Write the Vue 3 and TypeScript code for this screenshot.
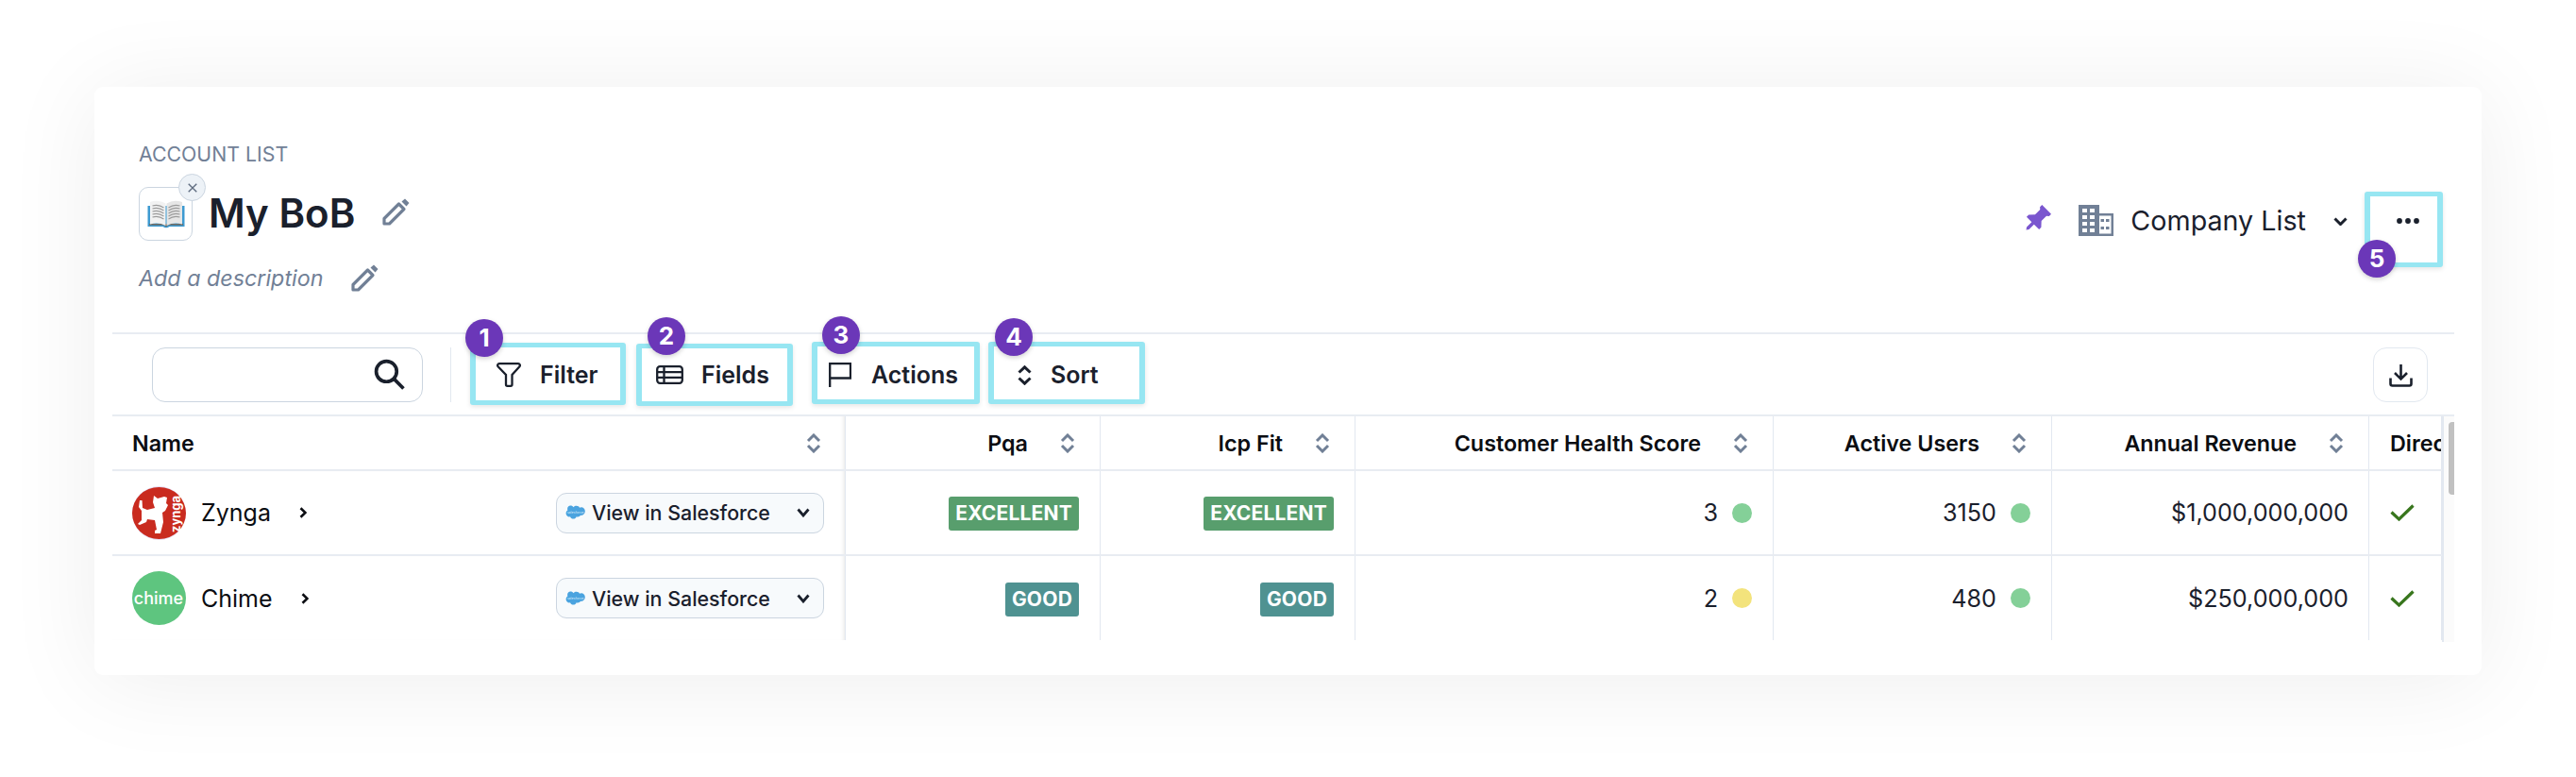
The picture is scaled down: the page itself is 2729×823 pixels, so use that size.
<script setup lang="ts">
interface Col { label: string; cls: string }
interface Row {
  name: string
  logo: 'zynga' | 'chime'
  pqa: string
  fit: string
  health: number
  healthColor: string
  users: number
  usersColor: string
  revenue: string
}
const cols: Col[] = [
  { label: 'Pqa', cls: 'c-pqa' },
  { label: 'Icp Fit', cls: 'c-fit' },
  { label: 'Customer Health Score', cls: 'c-health' },
  { label: 'Active Users', cls: 'c-users' },
  { label: 'Annual Revenue', cls: 'c-rev' },
]
const rows: Row[] = [
  { name: 'Zynga', logo: 'zynga', pqa: 'EXCELLENT', fit: 'EXCELLENT', health: 3, healthColor: '#84d098', users: 3150, usersColor: '#84d098', revenue: '$1,000,000,000' },
  { name: 'Chime', logo: 'chime', pqa: 'GOOD', fit: 'GOOD', health: 2, healthColor: '#f3e37c', users: 480, usersColor: '#84d098', revenue: '$250,000,000' },
]
const bookLines = [9, 12, 15, 18, 21]
</script>

<template>
  <div class="page">
    <section class="card">
      <header class="head">
        <div class="head-left">
          <div class="eyebrow">ACCOUNT LIST</div>
          <div class="title-row">
            <div class="emoji-box">
              <svg class="book" viewBox="0 0 40 32" aria-hidden="true">
                <path d="M0.5 7H39.5V29H23.5Q20 31.5 16.5 29H0.5Z" fill="#3d9ad1" />
                <path d="M2 27.5H18L20 29.5L22 27.5H38V26H2Z" fill="#6f6a62" />
                <path d="M3 3Q12 0 19.5 4.5V28Q12 24 3 26.5Z" fill="#f2f2f2" />
                <path d="M37 3Q28 0 20.5 4.5V28Q28 24 37 26.5Z" fill="#e6e6e6" />
                <g stroke="#9a9a9a" stroke-width="1.1" fill="none">
                  <path v-for="y in bookLines" :key="'l' + y" :d="`M5.5 ${y - 2}Q12 ${y - 4} 17.5 ${y}`" />
                  <path v-for="y in bookLines" :key="'r' + y" :d="`M34.5 ${y - 2}Q28 ${y - 4} 22.5 ${y}`" />
                </g>
              </svg>
              <span class="close">
                <svg viewBox="0 0 14 14" aria-hidden="true"><path d="M2 2L12 12M12 2L2 12" /></svg>
              </span>
            </div>
            <h1 class="title">My BoB</h1>
            <svg class="pencil pencil-title" viewBox="0 0 29 29" aria-hidden="true">
              <path class="pencil-body" d="M2 21.5L17.5 6L23 11.5L7.5 27H2Z" />
              <path class="pencil-tip" d="M20.5 3.5L24 0.5L28.5 5L25.5 8.5Z" />
            </svg>
          </div>
          <div class="desc-row">
            <span class="desc">Add a description</span>
            <svg class="pencil pencil-desc" viewBox="0 0 29 29" aria-hidden="true">
              <path class="pencil-body" d="M2 21.5L17.5 6L23 11.5L7.5 27H2Z" />
              <path class="pencil-tip" d="M20.5 3.5L24 0.5L28.5 5L25.5 8.5Z" />
            </svg>
          </div>
        </div>
        <div class="head-right">
          <svg class="pin" viewBox="0 0 24 24" aria-hidden="true">
            <path transform="rotate(45 12 12)" d="M6.5 0.5H17.5V3L15.8 4.5V10.5L19.5 14.5V17H13.4V23L12 25L10.6 23V17H4.5V14.5L8.2 10.5V4.5L6.5 3Z" />
          </svg>
          <svg class="building" viewBox="0 0 37 33" aria-hidden="true">
            <path d="M0 0H22V9H37V33H0Z" fill="#718096" />
            <rect x="22" y="11.5" width="12.5" height="19" fill="#fff" />
            <g fill="#fff">
              <rect x="4" y="4" width="5" height="4" /><rect x="12" y="4" width="5" height="4" />
              <rect x="4" y="11" width="5" height="4" /><rect x="12" y="11" width="5" height="4" />
              <rect x="4" y="18" width="5" height="4" /><rect x="12" y="18" width="5" height="4" />
              <rect x="4" y="25" width="5" height="4" /><rect x="12" y="25" width="5" height="4" />
            </g>
            <g fill="#718096">
              <rect x="23.5" y="15" width="3.5" height="3" /><rect x="23.5" y="23" width="3.5" height="3" />
              <rect x="29" y="15" width="3.5" height="3" /><rect x="29" y="23" width="3.5" height="3" />
            </g>
          </svg>
          <span class="company">Company List</span>
          <svg class="chev-down" viewBox="0 0 15 9" aria-hidden="true"><path d="M1.5 1.5L7.5 7.5L13.5 1.5" /></svg>
          <button class="hl more" type="button">
            <svg class="dots" viewBox="0 0 24 6" aria-hidden="true">
              <circle cx="3" cy="3" r="2.9" /><circle cx="12" cy="3" r="2.9" /><circle cx="21" cy="3" r="2.9" />
            </svg>
            <span class="badge b5">5</span>
          </button>
        </div>
      </header>

      <div class="toolbar">
        <label class="search">
          <input class="search-input" type="text" aria-label="Search" />
          <svg class="search-icon" viewBox="0 0 32 32" aria-hidden="true">
            <circle cx="13" cy="13" r="10.5" /><path d="M21 21L30.5 30.5" />
          </svg>
        </label>
        <span class="vsep"></span>
        <button class="hl tool t-filter" type="button">
          <svg class="ic ic-filter" viewBox="0 0 26 26" aria-hidden="true">
            <path d="M3 1.2H23A1.8 1.8 0 0 1 24.4 4.2L16.5 13V23.3A1.5 1.5 0 0 1 15 24.8H11.5A1.5 1.5 0 0 1 10 23.3V13L1.6 4.2A1.8 1.8 0 0 1 3 1.2Z" />
          </svg>
          <span>Filter</span>
          <span class="badge b1">1</span>
        </button>
        <button class="hl tool t-fields" type="button">
          <svg class="ic ic-fields" viewBox="0 0 29 20" aria-hidden="true">
            <rect x="1.2" y="1.2" width="26.6" height="17.6" rx="3" />
            <path d="M1.2 7.2H27.8M1.2 12.8H27.8M8.5 1.2V18.8" />
          </svg>
          <span>Fields</span>
          <span class="badge b2">2</span>
        </button>
        <button class="hl tool t-actions" type="button">
          <svg class="ic ic-flag" viewBox="0 0 24 26" aria-hidden="true">
            <path d="M1.2 26V1.2H23V16.5H1.2" />
          </svg>
          <span>Actions</span>
          <span class="badge b3">3</span>
        </button>
        <button class="hl tool t-sort" type="button">
          <svg class="ic ic-sort" viewBox="0 0 15 21" aria-hidden="true">
            <path d="M1.5 7.5L7.5 1.8L13.5 7.5M1.5 13.5L7.5 19.2L13.5 13.5" />
          </svg>
          <span>Sort</span>
          <span class="badge b4">4</span>
        </button>
        <button class="download" type="button" aria-label="Download">
          <svg viewBox="0 0 25 25" aria-hidden="true">
            <path d="M12.5 1V16M6 10L12.5 16.5L19 10M1.5 15.5V21.5A2 2 0 0 0 3.5 23.5H21.5A2 2 0 0 0 23.5 21.5V15.5" />
          </svg>
        </button>
      </div>

      <div class="table-wrap">
        <div class="table">
          <div class="tr thead">
            <div class="cell c-name">
              <span>Name</span>
              <svg class="sort" viewBox="0 0 16 21" aria-hidden="true"><path d="M2 8L8 2L14 8M2 13L8 19L14 13" /></svg>
            </div>
            <div v-for="c in cols" :key="c.label" class="cell num" :class="c.cls">
              <span>{{ c.label }}</span>
              <svg class="sort" viewBox="0 0 16 21" aria-hidden="true"><path d="M2 8L8 2L14 8M2 13L8 19L14 13" /></svg>
            </div>
            <div class="cell c-direct"><span>Direct</span></div>
          </div>

          <div v-for="r in rows" :key="r.name" class="tr tbody" :class="'row-' + r.logo">
            <div class="cell c-name">
              <svg v-if="r.logo === 'zynga'" class="avatar" viewBox="0 0 57 57" aria-hidden="true">
                <circle cx="28.5" cy="28.5" r="28.5" fill="#e6dff6" />
                <ellipse cx="28.5" cy="28.5" rx="28.5" ry="27.6" fill="#c92b1f" />
                <path fill="#fff" d="M23 10L27 13L34 11L37 12L36 18L38 20L35 26L32 28L33 38L30 50L24 50L24 47L26 46L24 36L16 35L15 38L8 41L6 40L10 36L10 26L7 22L8 15L10.5 15L11 23L16 25L24 23L22 17Z" />
                <text class="logo-z" transform="translate(50.5 49) rotate(-90)">zynga</text>
              </svg>
              <svg v-else class="avatar" viewBox="0 0 57 57" aria-hidden="true">
                <circle cx="28.5" cy="28.5" r="28.5" fill="#5ec57f" />
                <text class="logo-c" x="28" y="34.5">chime</text>
              </svg>
              <span class="acct">{{ r.name }}</span>
              <svg class="chev-right" viewBox="0 0 8 12" aria-hidden="true"><path d="M1.5 1.2L6.5 6L1.5 10.8" /></svg>
              <button class="sf" type="button">
                <svg class="cloud" viewBox="0 0 21 16" aria-hidden="true">
                  <path fill="#4aa3df" d="M8.6 2.2C9.4 1.2 10.5 0.8 11.7 0.8C13.2 0.8 14.4 1.5 15 2.7C15.6 2.5 16.2 2.3 16.8 2.3C19 2.3 20.8 4.2 20.8 6.6C20.8 9 19 10.9 16.8 10.9C16.5 10.9 16.2 10.9 16 10.8C15.4 11.9 14.3 12.5 13.1 12.5C12.6 12.5 12.1 12.4 11.7 12.2C11.1 13.6 9.9 14.6 8.4 14.6C6.9 14.6 5.6 13.7 5 12.3C4.8 12.4 4.5 12.4 4.2 12.4C2.3 12.4 0.6 10.7 0.6 8.7C0.6 7.3 1.3 6.1 2.4 5.5C2.2 5 2.1 4.4 2.1 3.9C2.1 2.1 3.6 0.6 5.3 0.6C6.7 0.6 7.9 1.2 8.6 2.2Z" />
                  <text class="logo-s" x="10.5" y="8.5">salesforce</text>
                </svg>
                <span class="sf-label">View in Salesforce</span>
                <svg class="sf-chev" viewBox="0 0 14 10" aria-hidden="true"><path d="M1.5 1.5L7 8L12.5 1.5" /></svg>
              </button>
            </div>
            <div class="cell num c-pqa"><span class="tag" :class="r.pqa === 'GOOD' ? 'tag-good' : 'tag-ex'">{{ r.pqa }}</span></div>
            <div class="cell num c-fit"><span class="tag" :class="r.fit === 'GOOD' ? 'tag-good' : 'tag-ex'">{{ r.fit }}</span></div>
            <div class="cell num c-health">
              <span class="val">{{ r.health }}</span>
              <i class="dot" :style="{ background: r.healthColor }"></i>
            </div>
            <div class="cell num c-users">
              <span class="val">{{ r.users }}</span>
              <i class="dot" :style="{ background: r.usersColor }"></i>
            </div>
            <div class="cell num c-rev"><span class="val">{{ r.revenue }}</span></div>
            <div class="cell c-direct">
              <svg class="check" viewBox="0 0 26 18" aria-hidden="true"><path d="M1.5 8.5L9.5 16L24.5 1.5" /></svg>
            </div>
          </div>
        </div>
        <div class="scrollbar"><div class="thumb"></div></div>
      </div>
    </section>
  </div>
</template>

<style scoped>
.page {
  box-sizing: border-box;
  width: 2729px;
  height: 823px;
  padding: 92px 100px 0;
  font-family: Inter, "Noto Sans", sans-serif;
  color: #1a202c;
  overflow: hidden;
}
.card {
  box-sizing: border-box;
  width: 2529px;
  height: 623px;
  padding: 0 29px 0 19px;
  background: #fff;
  border-radius: 9px;
  box-shadow: 0 6px 100px rgba(0, 0, 0, 0.07);
}
.head {
  box-sizing: border-box;
  height: 262px;
  padding: 58px 12px 0 28px;
  display: flex;
  justify-content: space-between;
  align-items: flex-start;
  border-bottom: 2px solid #e8ecf2;
}
.eyebrow {
  font-size: 21.3px;
  line-height: 26px;
  color: #718096;
}
.title-row {
  display: flex;
  align-items: center;
  margin-top: 22px;
  height: 57px;
}
.emoji-box {
  box-sizing: border-box;
  position: relative;
  width: 57px;
  height: 57px;
  border: 1px solid #cbd5e0;
  border-radius: 10px;
  display: flex;
  align-items: center;
  justify-content: center;
}
.book { width: 40px; height: 32px; }
.close {
  box-sizing: border-box;
  position: absolute;
  top: -15px;
  right: -15px;
  width: 29px;
  height: 29px;
  border-radius: 50%;
  background: #edf2f7;
  border: 1px solid #cbd5e0;
  display: flex;
  align-items: center;
  justify-content: center;
}
.close svg { width: 12px; height: 12px; fill: none; stroke: #5f6c80; stroke-width: 1.6; }
.title {
  margin: -2px 0 0 17px;
  font-size: 42px;
  line-height: 57px;
  font-weight: 600;
}
.pencil { width: 29px; height: 29px; }
.pencil-body { fill: none; stroke: #718096; stroke-width: 3.2; stroke-linejoin: round; }
.pencil-tip { fill: #718096; }
.pencil-title { margin-left: 29px; margin-top: -4px; }
.desc-row {
  display: flex;
  align-items: center;
  margin-top: 22px;
  height: 34px;
}
.desc {
  font-size: 23.3px;
  font-style: italic;
  color: #718096;
}
.pencil-desc { margin-left: 30px; }

.head-right {
  margin-top: 53px;
  display: flex;
  align-items: flex-start;
}
.pin { width: 30px; height: 30px; margin: 14px 0 0; fill: #7a56cf; }
.building { width: 37px; height: 33px; margin: 14px 0 0 29px; }
.company { margin: 11px 0 0 18px; font-size: 28.7px; line-height: 40px; }
.chev-down { width: 15px; height: 9px; margin: 27px 0 0 29px; fill: none; stroke: #1a202c; stroke-width: 3; }

.hl {
  box-sizing: border-box;
  position: relative;
  background: #fff;
  border-style: solid;
  border-color: #97e6f2;
  border-width: 5px 6px;
  border-radius: 3px;
  box-shadow: 0 2px 5px rgba(0, 0, 0, 0.1);
  padding: 0;
  font: inherit;
  color: inherit;
}
.more {
  width: 83px;
  height: 80px;
  margin-left: 18px;
  display: flex;
  align-items: flex-start;
  justify-content: flex-start;
}
.dots { width: 24px; height: 6px; margin: 23px 0 0 28px; fill: #1a202c; }

.badge {
  position: absolute;
  width: 40px;
  height: 40px;
  border-radius: 50%;
  background: #6b37b8;
  color: #fff;
  font-size: 26px;
  font-weight: 700;
  line-height: 40px;
  text-align: center;
  box-shadow: 0 2px 5px rgba(0, 0, 0, 0.18);
}
.b1 { left: -11px; top: -30px; }
.b2 { left: 6px; top: -33px; }
.b3 { left: 5px; top: -32px; }
.b4 { left: 1px; top: -30px; }
.b5 { left: -13px; top: 46px; }

.toolbar {
  display: flex;
  align-items: flex-start;
  height: 85px;
  padding-left: 42px;
}
.search {
  box-sizing: border-box;
  position: relative;
  display: block;
  width: 287px;
  height: 58px;
  margin-top: 14px;
  border: 1px solid #cbd5e0;
  border-radius: 14px;
}
.search-input {
  box-sizing: border-box;
  display: block;
  width: 100%;
  height: 100%;
  border: 0;
  background: transparent;
  outline: 0;
}
.search-icon {
  position: absolute;
  right: 18px;
  top: 11px;
  width: 33px;
  height: 33px;
  fill: none;
  stroke: #1a202c;
  stroke-width: 3.6;
}
.vsep {
  width: 1px;
  height: 58px;
  margin: 14px 0 0 29px;
  background: #e2e8f0;
}
.tool {
  height: 66px;
  display: flex;
  align-items: center;
  font-size: 25px;
  font-weight: 600;
  line-height: 30px;
}
.ic { fill: none; stroke: #1a202c; stroke-width: 2.3; flex: none; }
.t-filter { width: 165px; margin: 9px 0 0 20px; padding: 2px 0 0 22px; gap: 20px; }
.ic-filter { width: 26px; height: 26px; }
.t-fields { width: 166px; margin: 10px 0 0 11px; padding-left: 15px; gap: 19px; }
.ic-fields { width: 29px; height: 20px; }
.t-actions { width: 178px; margin: 8px 0 0 20px; padding: 4px 0 0 12px; gap: 21px; }
.ic-flag { width: 24px; height: 26px; }
.t-sort { width: 166px; margin: 8px 0 0 9px; padding: 4px 0 0 25px; gap: 20px; }
.ic-sort { width: 15px; height: 21px; stroke-width: 3; }
.download {
  box-sizing: border-box;
  width: 58px;
  height: 58px;
  margin: 14px 28px 0 auto;
  padding: 0;
  background: #fff;
  border: 1px solid #e2e8f0;
  border-radius: 14px;
  display: flex;
  align-items: center;
  justify-content: center;
}
.download svg { width: 25px; height: 25px; fill: none; stroke: #1a202c; stroke-width: 2.6; }

.table-wrap {
  display: flex;
  height: 239px;
  border-top: 2px solid #e8ecf2;
  overflow: hidden;
}
.table { width: 2468px; flex: none; }
.tr {
  display: grid;
  grid-template-columns: 777px 270px 270px 443px 295px 336px 77px;
  box-sizing: border-box;
}
.thead {
  height: 58px;
  border-bottom: 2px solid #e8ecf2;
  font-size: 23.3px;
  font-weight: 600;
  color: #0b0d12;
}
.tbody { height: 90px; border-bottom: 2px solid #e8ecf2; }
.tbody:last-child { height: 89px; border-bottom: 0; }
.cell {
  box-sizing: border-box;
  display: flex;
  align-items: center;
  min-width: 0;
  border-right: 1px solid #e2e8f0;
}
.c-name {
  padding: 0 22px 0 21px;
  box-shadow: inset -4px 0 4px -3px rgba(0, 0, 0, 0.1);
}
.thead .c-name { justify-content: space-between; padding-right: 25px; }
.num { justify-content: flex-end; }
.thead .num { padding-right: 26px; gap: 34px; }
.sort { width: 16px; height: 21px; fill: none; stroke: #718096; stroke-width: 3; flex: none; }
.tbody .num { padding-right: 22px; }
.tbody .c-rev { padding-right: 21px; }
.c-direct {
  padding-left: 22px;
  overflow: hidden;
  white-space: nowrap;
}
.avatar { width: 57px; height: 57px; flex: none; }
.logo-z { font-family: Inter, sans-serif; font-size: 13px; font-weight: 700; fill: #fff; }
.logo-c { font-family: Inter, sans-serif; font-size: 18px; font-weight: 500; fill: #fff; text-anchor: middle; }
.logo-s { font-family: Inter, sans-serif; font-size: 3.6px; fill: #d7ecfa; text-anchor: middle; }
.acct { margin-left: 16px; font-size: 25px; color: #0b0d12; }
.chev-right { width: 8px; height: 12px; margin-left: 30px; fill: none; stroke: #0b0d12; stroke-width: 2.6; }
.sf {
  box-sizing: border-box;
  width: 284px;
  height: 43px;
  margin-left: auto;
  padding: 0 14px 0 9px;
  display: flex;
  align-items: center;
  background: #f7fafc;
  border: 1px solid #cbd5e0;
  border-radius: 11px;
  font: inherit;
  color: #1a202c;
}
.cloud { width: 21px; height: 16px; flex: none; }
.sf-label { margin-left: 7px; font-size: 21.4px; font-weight: 500; white-space: nowrap; }
.sf-chev { width: 14px; height: 10px; margin-left: auto; fill: none; stroke: #1a202c; stroke-width: 2.8; }
.tag {
  box-sizing: border-box;
  height: 36px;
  margin-top: 2px;
  padding: 0 7px;
  border-radius: 3px;
  color: #fff;
  font-size: 21px;
  font-weight: 700;
  line-height: 36px;
  letter-spacing: 0.2px;
}
.tag-ex { background: #589e6d; }
.tag-good { background: #4f9291; }
.val { font-size: 25.2px; }
.dot { width: 21px; height: 21px; margin-left: 15px; border-radius: 50%; flex: none; }
.check { width: 26px; height: 18px; fill: none; stroke: #38761d; stroke-width: 3.2; }
.scrollbar {
  box-sizing: border-box;
  width: 13px;
  padding-top: 6px;
  border-left: 2px solid #e2e8f0;
  display: flex;
  justify-content: flex-end;
  align-items: flex-start;
  background: #fbfbfb;
}
.thumb { width: 6px; height: 77px; background: #c1c1c1; border-radius: 4px 0 0 4px; }
</style>

<style>
html, body { margin: 0; background: #fff; overflow: hidden; }
</style>
